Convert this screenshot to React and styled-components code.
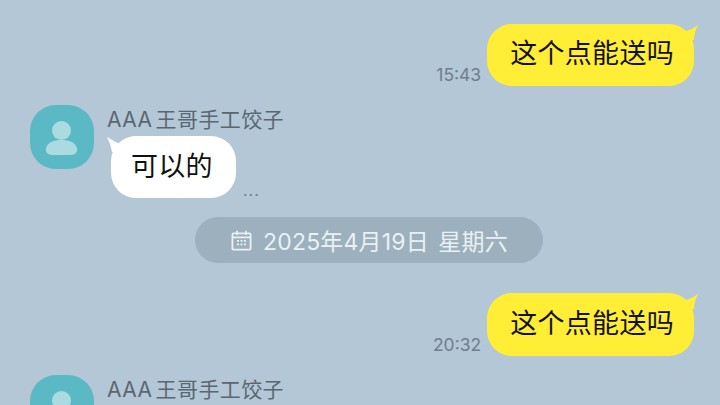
import React from 'react';
import styled, { createGlobalStyle } from 'styled-components';

const FONT = '"Inter", "Noto Sans CJK SC", sans-serif';

const GlobalStyle = createGlobalStyle`
  html, body {
    margin: 0;
    padding: 0;
    background: #b3c7d6;
    overflow: hidden;
  }
`;

function BubbleTail({ side }) {
  return (
    <Tail side={side} width="16" height="16" viewBox="0 0 16 16">
      {side === 'right' ? (
        <path d="M4 7 C8 6 12 4 16 1 C14 5 12 10 12 16 L4 16 Z" fill="#ffee35" />
      ) : (
        <path d="M16 9 C10 7 5 4 0 1 C2 5 4 10 5 16 L16 16 Z" fill="#ffffff" />
      )}
    </Tail>
  );
}

function Outgoing({ time }) {
  return (
    <OutRow>
      <Time>{time}</Time>
      <SentBubble>
        <BubbleText>这个点能送吗</BubbleText>
        <BubbleTail side="right" />
      </SentBubble>
    </OutRow>
  );
}

function Avatar() {
  return (
    <AvatarBox>
      <svg width="64" height="64" viewBox="0 0 64 64">
        <circle cx="31.5" cy="25.5" r="9.5" fill="#a9dbe0" />
        <path d="M16 43 C18 37 24 35 31.5 35 C39 35 45 37 47 43 C48 47 45 50 41 50 L22 50 C18 50 15 47 16 43 Z" fill="#a9dbe0" />
      </svg>
    </AvatarBox>
  );
}

function DatePill({ children }) {
  return (
    <DateRow>
      <Pill>
        <svg width="21" height="21" viewBox="0 0 21 21" fill="none" stroke="#eaf0f3" strokeWidth="1.8">
          <rect x="1.4" y="3.4" width="18.2" height="16.2" rx="1.2" />
          <path d="M1.4 7.4 H19.6 M6 0.8 V5 M15 0.8 V5" />
          <path d="M6 10.8 h2 M9.5 10.8 h2 M13 10.8 h2 M6 14.4 h2 M9.5 14.4 h2 M13 14.4 h2" strokeWidth="1.7" />
        </svg>
        <PillText>{children}</PillText>
      </Pill>
    </DateRow>
  );
}

export default function App() {
  return (
    <Page>
      <GlobalStyle />
      <Outgoing time="15:43" />

      <InRow>
        <Avatar />
        <InBody>
          <Name>AAA 王哥手工饺子</Name>
          <BubbleLine>
            <ReceivedBubble>
              <BubbleText>可以的</BubbleText>
              <BubbleTail side="left" />
            </ReceivedBubble>
            <Dots>...</Dots>
          </BubbleLine>
        </InBody>
      </InRow>

      <DatePill>2025年4月19日&nbsp; 星期六</DatePill>

      <Outgoing time="20:32" />

      <InRow>
        <Avatar />
        <InBody>
          <Name>AAA 王哥手工饺子</Name>
        </InBody>
      </InRow>
    </Page>
  );
}

const Page = styled.div`
  width: 720px;
  height: 405px;
  box-sizing: border-box;
  padding-top: 23.5px;
  overflow: hidden;
  background: #b3c7d6;
  font-family: ${FONT};
`;

const OutRow = styled.div`
  display: flex;
  justify-content: flex-end;
  align-items: flex-end;
  gap: 6px;
  padding-right: 26px;
`;

const Time = styled.span`
  font-size: 17.5px;
  line-height: 21px;
  margin-bottom: 1px;
  color: #6f7f8c;
`;

const SentBubble = styled.div`
  position: relative;
  height: 62.5px;
  padding: 0 20px 0 23px;
  display: flex;
  align-items: center;
  border-radius: 25px;
  background: #ffee35;
`;

const BubbleText = styled.span`
  position: relative;
  top: -3px;
  color: #111;
  font-size: 27px;
  letter-spacing: 0.3px;
`;

const Tail = styled.svg`
  position: absolute;
  top: 0;
  ${(p) => (p.side === 'right' ? 'right: -4px;' : 'left: -4px;')}
`;

const InRow = styled.div`
  display: flex;
  align-items: flex-start;
  gap: 13px;
  padding: 19px 0 0 30px;
`;

const AvatarBox = styled.div`
  width: 64px;
  height: 64px;
  flex: none;
  border-radius: 26px;
  background: #5bb9c6;
  overflow: hidden;
  svg {
    display: block;
  }
`;

const InBody = styled.div`
  display: flex;
  flex-direction: column;
`;

const Name = styled.div`
  font-size: 21px;
  line-height: 29px;
  letter-spacing: 0.4px;
  word-spacing: -3px;
  color: #5b6770;
`;

const BubbleLine = styled.div`
  display: flex;
  align-items: flex-end;
  gap: 7px;
  margin-top: 2px;
  padding-left: 4px;
`;

const ReceivedBubble = styled.div`
  position: relative;
  width: 125px;
  height: 62px;
  box-sizing: border-box;
  padding-left: 20px;
  display: flex;
  align-items: center;
  border-radius: 25px;
  background: #fff;
`;

const Dots = styled.span`
  font-size: 16px;
  line-height: 16px;
  letter-spacing: 1px;
  color: #6f7f8c;
`;

const DateRow = styled.div`
  display: flex;
  justify-content: center;
  padding: 19px 0 30px 18px;
`;

const Pill = styled.div`
  width: 348px;
  height: 46px;
  box-sizing: border-box;
  padding-left: 36px;
  display: flex;
  align-items: center;
  gap: 11px;
  border-radius: 23px;
  background: #9cb0bd;
`;

const PillText = styled.span`
  font-size: 23px;
  letter-spacing: 0.2px;
  word-spacing: -2px;
  color: #eaf0f3;
  white-space: nowrap;
`;
